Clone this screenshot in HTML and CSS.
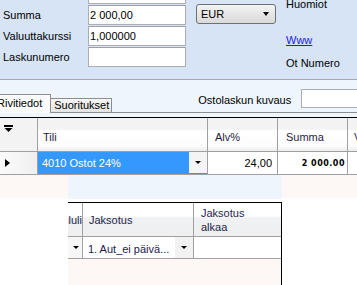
FILE: index.html
```html
<!DOCTYPE html>
<html>
<head>
<meta charset="utf-8">
<link rel="stylesheet" href="styles.css">
</head>
<body>
<div class="top">
  <div class="form">
    <div></div><div class="inp partial"></div>
    <div class="lbl">Summa</div><div class="inp">2 000,00</div>
    <div class="lbl">Valuuttakurssi</div><div class="inp">1,000000</div>
    <div class="lbl">Laskunumero</div><div class="inp"></div>
  </div>
  <div class="combo"><span>EUR</span><i class="carr"></i></div>
  <div class="side">
    <div class="huom">Huomiot</div>
    <a class="www">Www</a>
    <div class="otn">Ot Numero</div>
  </div>
</div>
<div class="band">
  <div class="tabs">
    <div class="tab active">Rivitiedot</div>
    <div class="tab">Suoritukset</div>
  </div>
  <div class="desc">
    <span class="desc-lbl">Ostolaskun kuvaus</span>
    <div class="desc-inp"></div>
  </div>
</div>
<div class="grid">
  <div class="grow ghead">
    <div class="rh rh-head"><svg width="9" height="7" viewBox="0 0 9 7"><rect x="0" y="0" width="9" height="2" fill="#000"/><path d="M0.5 3h8l-4 4z" fill="#000"/></svg></div>
    <div class="hc c-tili">Tili</div>
    <div class="hc c-alv">Alv%</div>
    <div class="hc c-sum">Summa</div>
    <div class="hc c-vero">Vero</div>
  </div>
  <div class="grow gdata">
    <div class="rh rh-data"><i class="rarr"></i></div>
    <div class="dc sel"><span>4010 Ostot 24%</span><span class="ddbtn"><i class="tri"></i></span></div>
    <div class="dc num">24,00</div>
    <div class="dc num bold">2 000.00</div>
    <div class="dc"></div>
  </div>
</div>
<div class="bottom">
  <div class="fill"></div>
  <div class="panel">
    <div class="panel-top"></div>
    <div class="grid2">
      <div class="g2row g2head">
        <div class="h2 clip"><span>Kululi</span></div>
        <div class="h2 p-jak">Jaksotus</div>
        <div class="h2 p-alk last">Jaksotus<br>alkaa</div>
      </div>
      <div class="g2row g2data">
        <div class="d2 btncell"><i class="tri"></i></div>
        <div class="d2 p-jakd"><span class="jtxt">1. Aut_ei päivä...</span><span class="ddbtn2"><i class="tri"></i></span></div>
        <div class="d2 last"></div>
      </div>
    </div>
  </div>
  <div class="fill grow1"></div>
</div>
</body>
</html>
```

FILE: styles.css
```css
html { overflow: hidden; }
body {
  margin: 0;
  width: 357px;
  height: 285px;
  overflow: hidden;
  background: #eef5fd;
  font-family: "Liberation Sans", Arial, sans-serif;
  font-size: 11px;
  color: #000;
}

/* top panel */
.top {
  height: 79px;
  border-bottom: 1px solid #a9a9a9;
  background: #d6e4f6;
  display: flex;
}
.form {
  display: grid;
  grid-template-columns: 88px 98px;
  grid-template-rows: 4px 21px 21px 21px;
}
.lbl {
  padding-left: 3px;
  padding-top: 1px;
  display: flex;
  align-items: center;
  white-space: nowrap;
}
.inp {
  margin-top: 1px;
  height: 20px;
  box-sizing: border-box;
  border: 1px solid #abadb3;
  border-top-color: #9da0a8;
  background: #fff;
  padding-left: 1px;
  line-height: 18px;
}
.inp.partial {
  margin-top: 0;
  height: 4px;
  border-top: none;
}
.combo {
  margin-left: 10px;
  margin-top: 4px;
  width: 80px;
  height: 20px;
  box-sizing: border-box;
  border: 1px solid #707070;
  border-radius: 3px;
  background: linear-gradient(#f4f4f4, #e6e6e6 50%, #dadada);
  display: flex;
  align-items: center;
  justify-content: space-between;
  padding: 0 6px 0 4px;
}
.carr {
  width: 0;
  height: 0;
  border-left: 3.5px solid transparent;
  border-right: 3.5px solid transparent;
  border-top: 4px solid #000;
}
.side {
  margin-left: 10px;
  display: flex;
  flex-direction: column;
  align-items: flex-start;
  line-height: 11px;
}
.huom { margin-top: -1px; }
.www {
  margin-top: 25px;
  color: #1a1aee;
  text-decoration: underline;
}
.otn { margin-top: 12px; }

/* tab band */
.band {
  height: 32px;
  border-bottom: 1px solid #8d8d8d;
  display: flex;
  align-items: flex-end;
}
.tabs {
  display: flex;
  align-items: flex-end;
  margin-bottom: -1px;
}
.tab {
  border: 1px solid #8d8d8d;
  border-bottom: none;
  white-space: nowrap;
}
.tab.active {
  margin-left: -8px;
  height: 18px;
  line-height: 16px;
  padding: 0 8px 0 4px;
  background: #fcfcfc;
}
.tab:not(.active) {
  border-left: none;
  height: 13px;
  line-height: 13px;
  margin-bottom: 1px;
  padding: 0 2px 0 3px;
  background: linear-gradient(#f7f7f7, #e4e4e4);
}
.desc {
  align-self: flex-start;
  margin-top: 9px;
  margin-left: 86px;
  display: flex;
  align-items: center;
  flex: none;
}
.desc-lbl {
  padding-top: 2px;
  white-space: nowrap;
}
.desc-inp {
  margin-left: 10px;
  width: 70px;
  height: 19px;
  box-sizing: border-box;
  border: 1px solid #abadb3;
  background: #fff;
  flex: none;
}

/* main grid */
.grid {
  margin-top: 4px;
  border-top: 1px solid #000;
  overflow: hidden;
}
.grow {
  display: grid;
  grid-template-columns: 38px 170px 70px 70px 60px;
  border-bottom: 1px solid #a0a0a0;
}
.ghead { height: 33px; }
.gdata { height: 22px; background: #fff; }
.grow > div {
  border-right: 1px solid #a0a0a0;
  box-sizing: border-box;
}
.rh { background: #f3f3f3; }
.rh-head {
  padding: 7px 0 0 4px;
  line-height: 0;
}
.rh-data {
  display: flex;
  align-items: center;
  padding-left: 5px;
  background: linear-gradient(90deg, #fbfbfb, #efefef);
}
.rarr {
  width: 0;
  height: 0;
  border-left: 5px solid #000;
  border-top: 4.5px solid transparent;
  border-bottom: 4.5px solid transparent;
}
.hc {
  display: flex;
  align-items: center;
  padding-top: 5px;
  white-space: nowrap;
  color: #1e1e40;
  background: linear-gradient(#f3f3f3 0, #f3f3f3 11px, #ffffff 13px, #fcfcfc 28px, #ececec 33px);
}
.c-tili { padding-left: 5px; }
.c-alv { padding-left: 7px; }
.c-sum { padding-left: 8px; }
.c-vero { padding-left: 6px; }
.dc {
  display: flex;
  align-items: center;
  white-space: nowrap;
}
.sel {
  background: #3399ff;
  color: #fff;
  padding-left: 4px;
}
.ddbtn {
  margin-left: auto;
  align-self: stretch;
  margin-bottom: 1px;
  width: 18px;
  background: #f4f4f4;
  display: flex;
  align-items: center;
  justify-content: center;
}
.tri {
  width: 0;
  height: 0;
  border-left: 3px solid transparent;
  border-right: 3px solid transparent;
  border-top: 3px solid #000;
}
.num {
  justify-content: flex-end;
  padding-right: 5px;
}
.bold {
  font-family: "DejaVu Sans", Verdana, sans-serif;
  font-weight: bold;
  font-size: 8px;
  letter-spacing: 0.5px;
  padding-right: 2px;
}

/* bottom composite */
.bottom {
  display: flex;
  height: 110px;
}
.fill {
  width: 68px;
  background: linear-gradient(#fdf7f5 23px, #ffffff 23px);
}
.fill.grow1 {
  width: auto;
  flex: 1;
}
.panel {
  width: 214px;
  display: flex;
  flex-direction: column;
}
.panel-top {
  height: 27px;
  background: linear-gradient(#eef5fd 24px, #ffffff 24px);
}
.grid2 {
  flex: 1;
  background: #fdf7f5;
  border-top: 1px solid #000;
  border-right: 1px solid #000;
}
.g2row {
  display: grid;
  grid-template-columns: 15px 111px 87px;
  border-bottom: 1px solid #a0a0a0;
  background: #fff;
}
.g2row > div {
  box-sizing: border-box;
  border-right: 1px solid #a0a0a0;
  white-space: nowrap;
  overflow: hidden;
}
.g2row > div.last { border-right: none; }
.g2head { height: 33px; }
.g2data { height: 21px; }
.h2 {
  display: flex;
  align-items: center;
  line-height: 14px;
  color: #1e1e48;
  background: linear-gradient(#ffffff 0, #ffffff 13px, #f0f1f3 15px, #eeeff1 33px);
}
.clip { justify-content: flex-end; }
.p-jak { padding-left: 6px; }
.p-alk { padding-left: 7px; }
.d2 {
  display: flex;
  align-items: center;
}
.btncell {
  justify-content: center;
  padding-left: 1px;
  background: #f6f6f6;
}
.p-jakd {
  padding-left: 5px;
  color: #24184e;
}
.jtxt { padding-top: 3px; }
.ddbtn2 {
  margin-left: auto;
  align-self: stretch;
  width: 18px;
  background: #f2f2f2;
  display: flex;
  align-items: center;
  justify-content: center;
}
```
